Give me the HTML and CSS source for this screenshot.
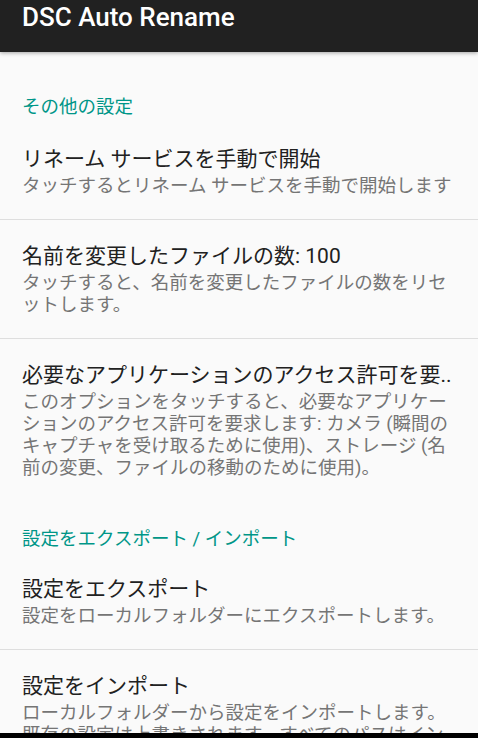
FILE: index.html
```
<!DOCTYPE html>
<html lang="ja">
<head>
<meta charset="utf-8">
<title>DSC Auto Rename</title>
<link rel="stylesheet" href="styles.css">
</head>
<body>
<div class="screen">
  <header class="appbar">
    <h1 class="appbar-title">DSC Auto Rename</h1>
  </header>
  <main class="content">
    <div class="prefs">
      <h2 class="category first">その他の設定</h2>
      <div class="pref">
        <div class="pref-title">リネーム サービスを手動で開始</div>
        <div class="pref-summary">タッチするとリネーム サービスを手動で開始します</div>
      </div>
      <div class="divider"></div>
      <div class="pref">
        <div class="pref-title">名前を変更したファイルの数: 100</div>
        <div class="pref-summary">タッチすると、名前を変更したファイルの数をリセットします。</div>
      </div>
      <div class="divider"></div>
      <div class="pref">
        <div class="pref-title nowrap">必要なアプリケーションのアクセス許可を要..</div>
        <div class="pref-summary">このオプションをタッチすると、必要なアプリケーションのアクセス許可を要求します: カメラ (瞬間のキャプチャを受け取るために使用)、ストレージ (名前の変更、ファイルの移動のために使用)。</div>
      </div>
      <h2 class="category second">設定をエクスポート / インポート</h2>
      <div class="pref">
        <div class="pref-title">設定をエクスポート</div>
        <div class="pref-summary">設定をローカルフォルダーにエクスポートします。</div>
      </div>
      <div class="divider"></div>
      <div class="pref">
        <div class="pref-title">設定をインポート</div>
        <div class="pref-summary">ローカルフォルダーから設定をインポートします。既存の設定は上書きされます。すべてのパスはインポートされます。</div>
      </div>
    </div>
  </main>
  <div class="navbar"></div>
</div>
</body>
</html>
```
FILE: styles.css
```
* { box-sizing: border-box; }
html, body {
  margin: 0;
  padding: 0;
  width: 478px;
  height: 738px;
  overflow: hidden;
  background: #fafafa;
  font-family: Roboto, "Noto Sans CJK JP", sans-serif;
}
.screen {
  display: flex;
  flex-direction: column;
  height: 738px;
}
.appbar {
  flex: 0 0 52px;
  background: #212121;
  display: flex;
  align-items: flex-start;
  padding-left: 22px;
  box-shadow: 0 1px 4px rgba(0,0,0,0.35);
  position: relative;
  z-index: 1;
}
.appbar-title {
  margin: 0;
  color: #ffffff;
  font-size: 26px;
  font-weight: 500;
  line-height: 32px;
  padding-top: 1px;
}
.content {
  flex: 1 1 auto;
  overflow: hidden;
  min-height: 0;
}
.prefs {
  padding-top: 20px;
}
.category {
  margin: 0;
  padding: 24px 22px 0;
  height: 48px;
  font-size: 18.5px;
  font-weight: 400;
  line-height: 22px;
  color: #009688;
}
.category.first { height: 51px; }
.category.second { padding-top: 27px; height: 52px; }
.pref {
  padding: 22px 22px 22px 22px;
}
.pref-title {
  font-size: 21px;
  line-height: 28px;
  color: #212121;
}
.pref-title.nowrap {
  white-space: nowrap;
  overflow: hidden;
}
.pref-summary {
  margin-top: 2px;
  font-size: 18.5px;
  line-height: 22px;
  color: #757575;
}
.divider {
  height: 1px;
  background: #dedede;
}
.navbar {
  flex: 0 0 5px;
  background: #000000;
}
```
